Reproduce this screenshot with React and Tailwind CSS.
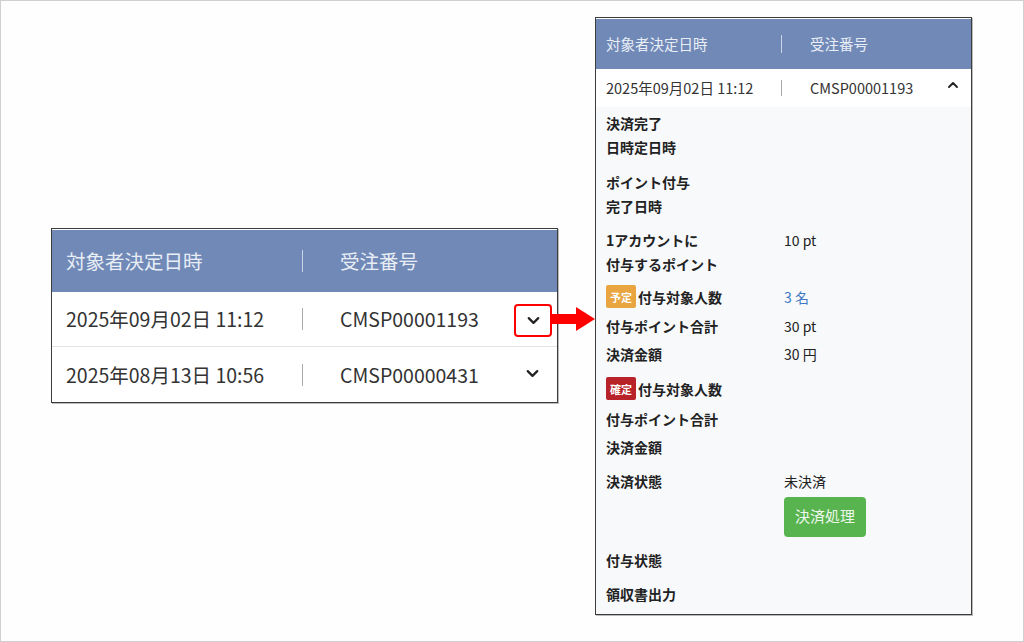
import React from 'react';
import { ChevronDown, ChevronUp } from 'lucide-react';

const font = { fontFamily: '"Noto Sans CJK JP", "Noto Sans", sans-serif' };

const Sep = ({ className }) => <span className={`block w-px ${className}`} />;

const Badge = ({ color, children }) => (
    <span className={`inline-flex items-center justify-center w-[30px] h-[23px] mr-[2px] text-[11px] font-bold text-white rounded-[2px] ${color}`}>
        {children}
    </span>
);

const Row = ({ label, value, className = '', lines = false }) => (
    <div className={`flex text-[14px] text-[#222] ${lines ? 'leading-6' : 'h-[28px] leading-[28px] items-center'} ${className}`}>
        <div className="w-[178px] font-bold flex items-center">{label}</div>
        <div className="flex-1">{value}</div>
    </div>
);

const LeftTable = () => (
    <div className="w-[507px] border border-[#3c3c3c] bg-white pt-px shadow-[1px_1px_0_#bbb]">
        <div className="h-[62px] bg-[#7089b7] flex items-center pl-[14px] text-[19.5px] text-[#e9eef6]">
            <div className="w-[236px]">対象者決定日時</div>
            <Sep className="h-[22px] bg-[#c9d4e6]" />
            <div className="pl-[37px]">受注番号</div>
        </div>
        <div className="relative h-[55px] flex items-center pl-[14px] text-[19.5px] text-[#333] border-b border-[#e3e3e3]">
            <div className="w-[236px]">2025年09月02日 11:12</div>
            <Sep className="h-[22px] bg-[#aaa]" />
            <div className="pl-[37px]">CMSP00001193</div>
            <ChevronDown size={19} strokeWidth={2.8} className="absolute left-[472px] top-[19px] text-[#222]" />
            <div className="absolute left-[462px] top-[12px] w-[38px] h-[33px] border-2 border-[#f00] rounded-[4px]" />
            <div className="absolute left-[500px] top-[22px] w-[26px] h-[10px] bg-[#f00]" />
            <svg className="absolute left-[524px] top-[15px]" width="19" height="24" viewBox="0 0 19 24">
                <polygon points="0,0 19,12 0,24" fill="#f00" />
            </svg>
        </div>
        <div className="h-[55px] flex items-center pl-[14px] text-[19.5px] text-[#333]">
            <div className="w-[236px]">2025年08月13日 10:56</div>
            <Sep className="h-[22px] bg-[#aaa]" />
            <div className="pl-[37px]">CMSP00000431</div>
            <ChevronDown size={19} strokeWidth={2.8} className="ml-auto mr-[15px] -mt-[3px] text-[#222]" />
        </div>
    </div>
);

const RightTable = () => (
    <div className="w-[377px] h-[598px] border border-[#3c3c3c] bg-white pt-px shadow-[1px_1px_0_#bbb] flex flex-col">
        <div className="h-[50px] bg-[#7089b7] flex items-center pl-[10px] text-[14.5px] text-[#e9eef6]">
            <div className="w-[175px]">対象者決定日時</div>
            <Sep className="h-[18px] bg-[#c9d4e6]" />
            <div className="pl-[28px]">受注番号</div>
        </div>
        <div className="h-[38px] flex items-center pl-[10px] text-[14.5px] text-[#333]">
            <div className="w-[175px]">2025年09月02日 11:12</div>
            <Sep className="h-[16px] bg-[#aaa]" />
            <div className="pl-[28px]">CMSP00001193</div>
            <ChevronUp size={16} strokeWidth={2.8} className="ml-auto mr-[10px] -mt-[6px] text-[#222]" />
        </div>
        <div className="flex-1 bg-[#f7f9fb] pl-[10px] pt-[4px]">
            <Row lines label={<span>決済完了<br />日時定日時</span>} />
            <Row lines className="mt-[11px]" label={<span>ポイント付与<br />完了日時</span>} />
            <Row lines className="mt-[10px]" label={<span>1アカウントに<br />付与するポイント</span>} value="10 pt" />
            <Row className="mt-[7px]" label={<><Badge color="bg-[#e9a53f]">予定</Badge>付与対象人数</>} value={<span className="text-[#3f78c4]">3 名</span>} />
            <Row className="mt-px" label="付与ポイント合計" value="30 pt" />
            <Row label="決済金額" value="30 円" />
            <Row className="mt-[7px]" label={<><Badge color="bg-[#b8232a]">確定</Badge>付与対象人数</>} />
            <Row className="mt-[2px]" label="付与ポイント合計" />
            <Row label="決済金額" />
            <div className="flex mt-[6px] text-[14px] text-[#222]">
                <div className="w-[178px] h-[28px] leading-[28px] font-bold">決済状態</div>
                <div>
                    <div className="h-[28px] leading-[28px]">未決済</div>
                    <button className="mt-[2px] w-[82px] h-[40px] rounded-[4px] bg-[#58b44f] text-[#eef7ec] text-[15px]">決済処理</button>
                </div>
            </div>
            <Row className="mt-[9px]" label="付与状態" />
            <Row className="mt-[6px]" label="領収書出力" />
        </div>
    </div>
);

export default function App() {
    return (
        <div style={font} className="w-[1024px] h-[642px] bg-[#fefefe] border border-[#cfcfcf] flex items-center pl-[50px] pb-[11px]">
            <LeftTable />
            <div className="ml-[37px]">
                <RightTable />
            </div>
        </div>
    );
}
